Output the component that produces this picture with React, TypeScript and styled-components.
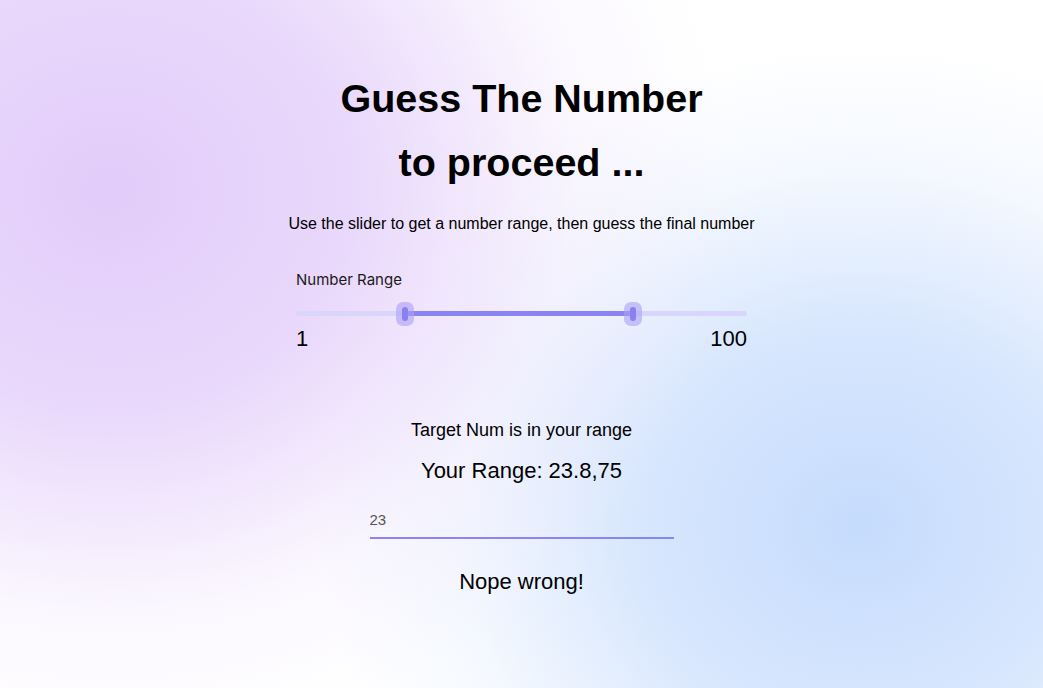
import React from "react";
import styled, { createGlobalStyle } from "styled-components";

const Global = createGlobalStyle`
  html, body { margin: 0; padding: 0; }
  body {
    font-family: "Liberation Sans", Arial, sans-serif;
    color: #000;
  }
`;

const Page = styled.div`
  width: 1043px;
  height: 688px;
  overflow: hidden;
  background:
    radial-gradient(ellipse 620px 560px at 110px 190px, rgba(226, 204, 250, 1) 0%, rgba(226, 204, 250, 0.75) 40%, rgba(240, 228, 252, 0.3) 75%, rgba(255, 255, 255, 0) 100%),
    radial-gradient(ellipse 540px 480px at 860px 525px, rgba(198, 220, 253, 1) 0%, rgba(205, 224, 253, 0.8) 40%, rgba(225, 236, 254, 0.35) 75%, rgba(255, 255, 255, 0) 100%),
    #ffffff;
  display: flex;
  flex-direction: column;
  align-items: center;
  padding-top: 66px;
  box-sizing: border-box;
`;

const Title = styled.h1`
  margin: 0;
  font-size: 39.5px;
  font-weight: 700;
  line-height: 64px;
  text-align: center;
`;

const Subtitle = styled.p`
  margin: 20px 0 0;
  font-size: 16px;
  line-height: 20px;
`;

const SliderBlock = styled.div`
  width: 451px;
  margin-top: 37px;
  display: flex;
  flex-direction: column;
`;

const SliderLabel = styled.div`
  font-family: Inter, "Liberation Sans", sans-serif;
  font-size: 15px;
  line-height: 18px;
  color: #1a1a1a;
`;

const Track = styled.div`
  position: relative;
  height: 5px;
  margin-top: 22px;
  border-radius: 3px;
  background: #d9d5fb;
`;

const Fill = styled.div`
  position: absolute;
  top: 0;
  bottom: 0;
  background: #8b83f2;
`;

const Thumb = styled.div`
  position: absolute;
  top: 50%;
  width: 18px;
  height: 24px;
  margin-left: -9px;
  margin-top: -12px;
  border-radius: 7px;
  background: rgba(170, 160, 245, 0.6);
  display: flex;
  align-items: center;
  justify-content: center;
  &::after {
    content: "";
    width: 6px;
    height: 14px;
    border-radius: 3px;
    background: #8a80f0;
  }
`;

const Ends = styled.div`
  display: flex;
  justify-content: space-between;
  margin-top: 10px;
  font-size: 22px;
  line-height: 26px;
`;

const Status = styled.p`
  margin: 67px 0 0;
  font-size: 18px;
  line-height: 22px;
`;

const RangeText = styled.p`
  margin: 17px 0 0;
  font-size: 22px;
  line-height: 26px;
`;

const GuessInput = styled.input`
  width: 304px;
  box-sizing: border-box;
  margin-top: 27px;
  padding: 0 0 8px;
  border: none;
  border-bottom: 2px solid #8d84f3;
  background: transparent;
  font-family: "Liberation Sans", Arial, sans-serif;
  font-size: 15px;
  line-height: 18px;
  color: #555;
  outline: none;
`;

const Result = styled.p`
  margin: 30px 0 0;
  font-size: 22px;
  line-height: 26px;
`;

export default function App() {
  const lo = 24.2;
  const hi = 74.7;
  return (
    <>
      <Global />
      <Page>
        <Title>Guess The Number</Title>
        <Title>to proceed ...</Title>
        <Subtitle>Use the slider to get a number range, then guess the final number</Subtitle>
        <SliderBlock>
          <SliderLabel>Number Range</SliderLabel>
          <Track>
            <Fill style={{ left: `${lo}%`, width: `${hi - lo}%` }} />
            <Thumb style={{ left: `${lo}%` }} />
            <Thumb style={{ left: `${hi}%` }} />
          </Track>
          <Ends>
            <span>1</span>
            <span>100</span>
          </Ends>
        </SliderBlock>
        <Status>Target Num is in your range</Status>
        <RangeText>Your Range: 23.8,75</RangeText>
        <GuessInput defaultValue="23" />
        <Result>Nope wrong!</Result>
      </Page>
    </>
  );
}
